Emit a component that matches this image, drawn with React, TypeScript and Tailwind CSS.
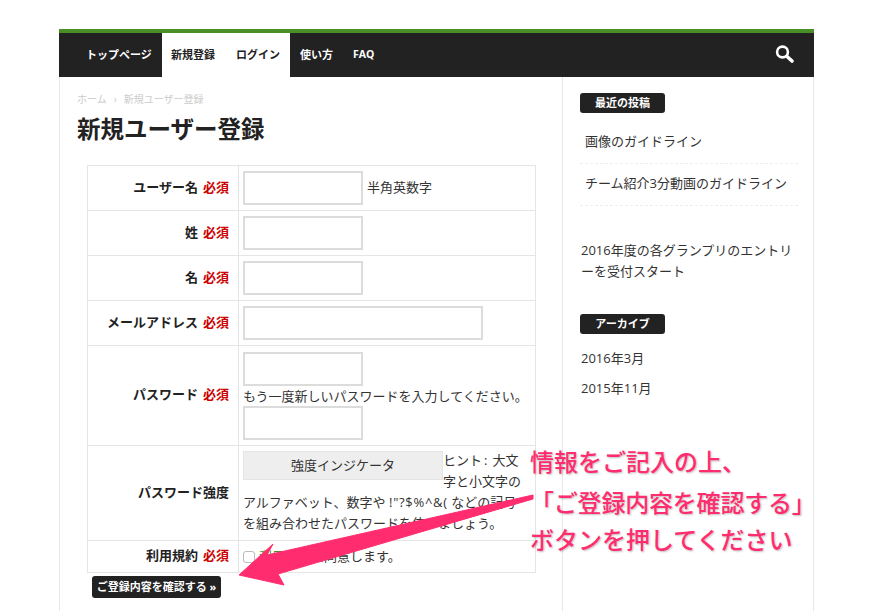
const cell = "border border-[#e5e5e5]";
const labelCell = "border border-[#e5e5e5] text-right pr-[9px] pb-[1px] font-bold text-[13px] text-[#222] align-middle";
const inputBox = "block h-[34px] w-[120px] border-2 border-[#dcdcdc] bg-white";

function Req() {
  return <span className="ml-[5px] text-[#c00]">必須</span>;
}

function SearchIcon() {
  return (
    <svg width="20" height="20" viewBox="0 0 20 20">
      <circle cx="7.5" cy="7" r="5.4" fill="none" stroke="white" strokeWidth="2.6" />
      <path d="M12 11.5 L17 16" stroke="white" strokeWidth="3.6" strokeLinecap="round" />
    </svg>
  );
}

function SideTitle({ children }: { children: string }) {
  return (
    <div className="flex h-[20px] w-[85px] items-center justify-center rounded-[3px] bg-[#222] text-[11px] font-bold text-white">
      {children}
    </div>
  );
}

export default function App() {
  return (
    <div className="relative h-[611px] w-[870px] overflow-hidden bg-white font-['Open_Sans','Noto_Sans_CJK_JP',sans-serif] text-[13px] text-[#333]">
      <div className="ml-[59px] w-[755px] pt-[29px]">
        <div className="h-[4px] bg-[#4a8f25]" />
        <nav className="flex h-[44px] items-stretch bg-[#222] text-[11px] font-bold text-white">
          <a className="ml-[27px] flex w-[76px] items-center">トップページ</a>
          <div className="flex w-[128px] items-center gap-[21px] bg-white pl-[9px] text-[#222]">
            <a>新規登録</a>
            <a>ログイン</a>
          </div>
          <a className="ml-[10px] flex items-center">使い方</a>
          <a className="ml-[20px] flex items-center text-[10.5px]">FAQ</a>
          <div className="ml-auto mr-[19px] flex items-center">
            <SearchIcon />
          </div>
        </nav>
        <div className="flex h-[534px] border-x border-[#e8e8e8]">
          <main className="w-[503px] border-r border-[#e8e8e8] pl-[17px]">
            <div className="mt-[15px] flex h-[15px] items-center text-[10px] text-[#ccc]">
              <span>ホーム</span>
              <span className="mx-[7px]">›</span>
              <span>新規ユーザー登録</span>
            </div>
            <h1 className="mt-[5px] h-[35px] whitespace-nowrap text-[23.5px] font-bold leading-[35px] text-[#222]">新規ユーザー登録</h1>
            <table className="ml-[10px] mt-[18px] w-[449px] table-fixed border-collapse">
              <tbody>
                <tr className="h-[45px]">
                  <td className={labelCell + " w-[151px]"}>ユーザー名<Req /></td>
                  <td className={cell + " pl-[4px]"}>
                    <div className="flex items-center">
                      <div className={inputBox} />
                      <span className="ml-[4px]">半角英数字</span>
                    </div>
                  </td>
                </tr>
                <tr className="h-[45px]">
                  <td className={labelCell}>姓<Req /></td>
                  <td className={cell + " pl-[4px]"}><div className={inputBox} /></td>
                </tr>
                <tr className="h-[45px]">
                  <td className={labelCell}>名<Req /></td>
                  <td className={cell + " pl-[4px]"}><div className={inputBox} /></td>
                </tr>
                <tr className="h-[45px]">
                  <td className={labelCell}>メールアドレス<Req /></td>
                  <td className={cell + " pl-[4px]"}><div className="h-[34px] w-[240px] border-2 border-[#dcdcdc]" /></td>
                </tr>
                <tr className="h-[100px]">
                  <td className={labelCell}>パスワード<Req /></td>
                  <td className={cell + " pl-[4px]"}>
                    <div className={inputBox} />
                    <div className="h-[20px] whitespace-nowrap leading-[20px]">もう一度新しいパスワードを入力してください。</div>
                    <div className={inputBox} />
                  </td>
                </tr>
                <tr className="h-[95px]">
                  <td className={labelCell}>パスワード強度</td>
                  <td className={cell + " pl-[4px] align-top leading-[21px]"}>
                    <div className="mt-[4px] flex">
                      <div className="mt-[1px] flex h-[29px] w-[200px] items-center justify-center border border-[#e5e5e5] bg-[#eee]">強度インジケータ</div>
                      <div className="whitespace-nowrap">
                        <div>ヒント<span className="ml-[2px] mr-[5px]">:</span>大文</div>
                        <div>字と小文字の</div>
                      </div>
                    </div>
                    <div className="whitespace-nowrap">アルファベット、数字や <span className="tracking-[0.7px]">!"?$%^&amp;(</span> などの記号</div>
                    <div className="whitespace-nowrap">を組み合わせたパスワードを使いましょう。</div>
                  </td>
                </tr>
                <tr className="h-[32px]">
                  <td className={labelCell}>利用規約<Req /></td>
                  <td className={cell + " pl-[4px]"}>
                    <div className="flex items-center">
                      <span className="mr-[4px] h-[12px] w-[12px] rounded-[3px] border border-[#bbb] bg-white" />
                      <span><span className="text-[#4a8f25]">利用規約</span>に同意します。</span>
                    </div>
                  </td>
                </tr>
              </tbody>
            </table>
            <button className="ml-[15px] mt-[3px] flex h-[22px] w-[129px] items-center justify-center rounded-[3px] bg-[#222] text-[11px] font-bold text-white">
              ご登録内容を確認する »
            </button>
          </main>
          <aside className="flex-1 pl-[17px] pr-[15px] pt-[16px]">
            <SideTitle>最近の投稿</SideTitle>
            <ul className="mt-[9px]">
              <li className="h-[42px] border-b border-dashed border-[#eee] pl-[5px] leading-[38px]">画像のガイドライン</li>
              <li className="h-[42px] border-b border-dashed border-[#eee] pl-[5px] leading-[38px]">チーム紹介3分動画のガイドライン</li>
            </ul>
            <p className="mt-[34px] pl-[1px] leading-[21px]">2016年度の各グランプリのエントリーを受付スタート</p>
            <div className="mt-[32px]"><SideTitle>アーカイブ</SideTitle></div>
            <p className="mt-[14px] pl-[1px] leading-[20px]">2016年3月</p>
            <p className="mt-[10px] pl-[1px] leading-[20px]">2015年11月</p>
          </aside>
        </div>
      </div>

      <div className="absolute left-[530px] top-[447px] text-[24px] font-medium leading-[30px] text-[#ff2d6f] [text-shadow:1px_1px_2px_rgba(0,0,0,0.25)]">情報をご記入の上、</div>
      <div className="absolute left-[530px] top-[488px] whitespace-nowrap text-[24px] font-medium leading-[30px] tracking-[-0.2px] text-[#ff2d6f] [text-shadow:1px_1px_2px_rgba(0,0,0,0.25)]">「ご登録内容を確認する」</div>
      <div className="absolute left-[530px] top-[525px] text-[24px] font-medium leading-[30px] text-[#ff2d6f] [text-shadow:1px_1px_2px_rgba(0,0,0,0.25)]">ボタンを押してください</div>

      <svg className="absolute left-0 top-0" width="870" height="611" viewBox="0 0 870 611">
        <path d="M533 495 L267 555 L273 544 L239 575 L284 585 L278 574 L533 499 Z" fill="#ff2d6f" stroke="#ff2d6f" strokeWidth="1" strokeLinejoin="round" />
      </svg>
    </div>
  );
}
